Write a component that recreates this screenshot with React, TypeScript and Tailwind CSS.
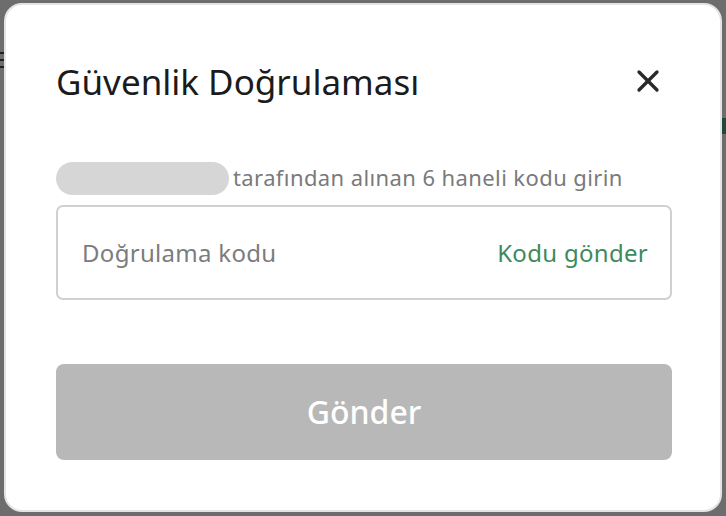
import { X } from "lucide-react";

const font = { fontFamily: '"Noto Sans", "Open Sans", sans-serif' };

export default function App() {
  return (
    <div
      className="relative w-[726px] h-[516px] overflow-hidden bg-[#6d6d6d]"
      style={font}
    >
      {/* page behind the overlay */}
      <div className="absolute left-0 top-[52px] flex flex-col gap-[5px]">
        <div className="w-[4px] h-[2px] bg-[#1e1e1e]" />
        <div className="w-[4px] h-[2px] bg-[#1e1e1e]" />
        <div className="w-[4px] h-[2px] bg-[#1e1e1e]" />
      </div>
      <div className="absolute right-0 top-[118px] w-[4px] h-[16px] bg-[#1f4a35]" />

      <div className="relative pl-[4px] pt-[3px]">
        <div className="w-[718px] h-[509px] rounded-[18px] bg-white border-2 border-[#e4e4e4] flex flex-col pl-[50px] pr-[48px]">
          <div className="flex items-center justify-between mt-[54px] h-[44px]">
            <h2 className="text-[35px] text-[#1b1b1b] leading-none">
              Güvenlik Doğrulaması
            </h2>
            <button className="mr-[6px] text-[#2a2a2a]">
              <X size={36} strokeWidth={2.2} />
            </button>
          </div>

          <div className="flex items-center gap-[4px] mt-[59px]">
            <div className="w-[173px] h-[33px] rounded-full bg-[#d6d6d6]" />
            <span className="text-[22px] leading-none text-[#7a7a7a] tracking-[0.4px] mt-[-3px]">
              tarafından alınan 6 haneli kodu girin
            </span>
          </div>

          <div className="mt-[10px] h-[95px] rounded-[7px] border-2 border-[#d0d0d0] flex items-center justify-between pl-[24px] pr-[22px]">
            <span className="text-[24px] text-[#7c7c7c] tracking-[0.3px]">Doğrulama kodu</span>
            <span className="text-[24px] text-[#3d8a5c] tracking-[0.3px]">Kodu gönder</span>
          </div>

          <button className="mt-[64px] h-[96px] w-full rounded-[8px] bg-[#b8b8b8] text-white text-[32px] font-medium">
            Gönder
          </button>
        </div>
      </div>
    </div>
  );
}
